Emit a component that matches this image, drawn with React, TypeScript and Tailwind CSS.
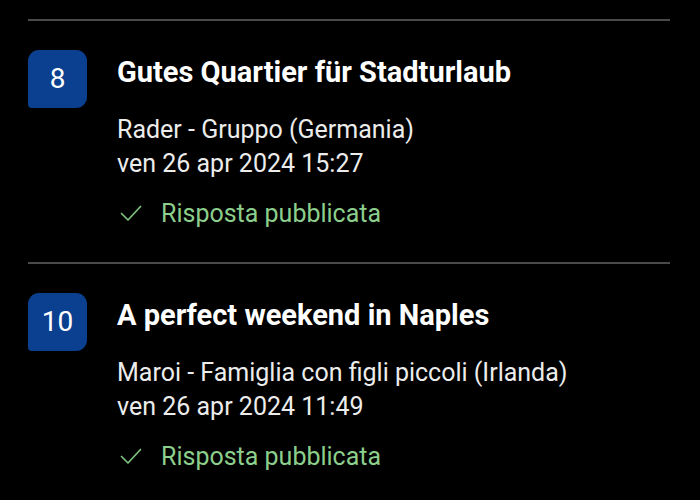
const items = [
  {
    score: "8",
    title: "Gutes Quartier für Stadturlaub",
    author: "Rader - Gruppo (Germania)",
    date: "ven 26 apr 2024 15:27",
  },
  {
    score: "10",
    title: "A perfect weekend in Naples",
    author: "Maroi - Famiglia con figli piccoli (Irlanda)",
    date: "ven 26 apr 2024 11:49",
  },
];

function CheckIcon() {
  return (
    <svg width="22" height="18" viewBox="0 0 22 18" fill="none">
      <path d="M1.5 8.5 L8 15 L20.5 1.5" stroke="#7dc27d" strokeWidth="1.7" strokeLinecap="round" strokeLinejoin="round" />
    </svg>
  );
}

export default function App() {
  return (
    <div className="w-[700px] h-[500px] overflow-hidden bg-black text-white font-['Roboto',sans-serif] pt-[19px]">
      {items.map((it) => (
        <div key={it.score} className="ml-[28px] mr-[30px] border-t-2 border-[#4a4a4a] flex pt-[29px] pb-[31px]">
          <div className="w-[59px] h-[58px] shrink-0 bg-[#0b3f8f] rounded-[11px] rounded-bl-[4px] flex items-center justify-center text-[28px] text-white">
            {it.score}
          </div>
          <div className="ml-[30px] flex flex-col">
            <div className="text-[29px] font-bold leading-[44px]">{it.title}</div>
            <div className="mt-[19px] text-[25px] leading-[34px] text-[#ececec]">{it.author}</div>
            <div className="text-[25px] leading-[34px] text-[#ececec]">{it.date}</div>
            <div className="mt-[16px] flex items-center text-[25px] leading-[34px] text-[#8ccf8c]">
              <span className="w-[44px] flex items-center pl-[3px]"><CheckIcon /></span>
              <span>Risposta pubblicata</span>
            </div>
          </div>
        </div>
      ))}
    </div>
  );
}
